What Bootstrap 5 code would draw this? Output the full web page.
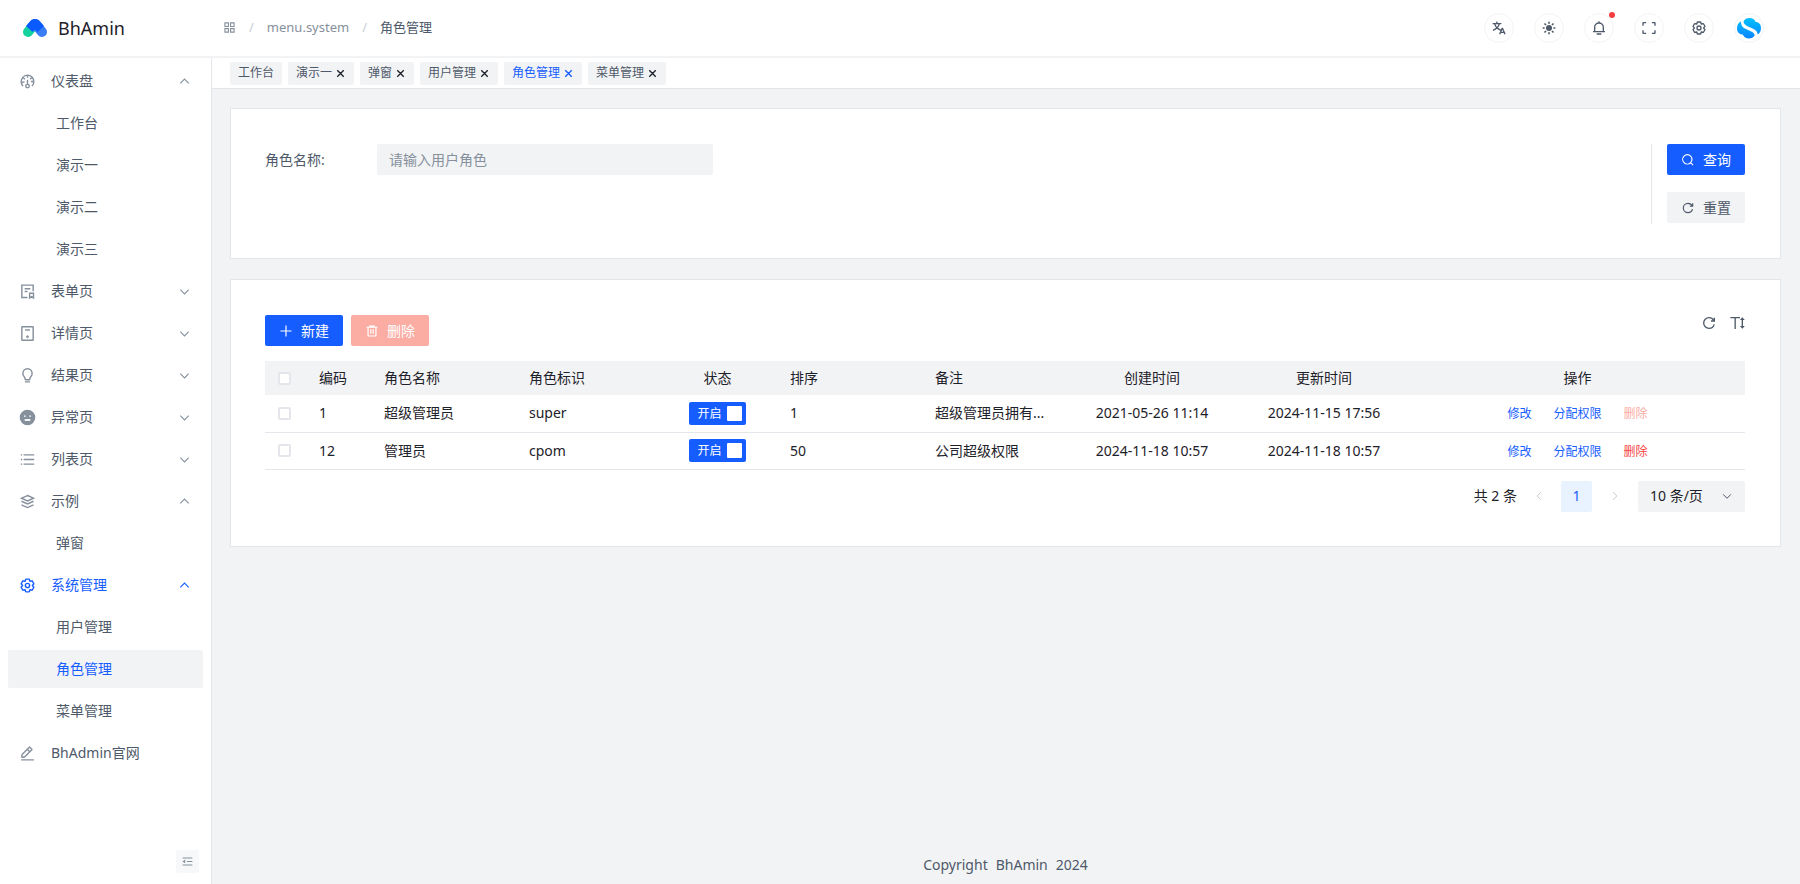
<!DOCTYPE html>
<html lang="zh-CN">
<head>
<meta charset="utf-8">
<meta name="viewport" content="width=device-width, initial-scale=1">
<title>BhAmin - 角色管理</title>
<link href="https://cdn.jsdelivr.net/npm/bootstrap@5.3.0/dist/css/bootstrap.min.css" rel="stylesheet">
<style>
:root{--brand:#165dff;--line:#e5e6eb;--fill:#f2f3f5;--t1:#1d2129;--t2:#4e5969;--t3:#86909c}
body{font-family:"Noto Sans","Noto Sans CJK SC",sans-serif;font-size:14px;line-height:22px;color:var(--t2);background:var(--fill)}
a{text-decoration:none;color:inherit}
.ico{width:1em;height:1em;fill:none;stroke:currentColor;stroke-width:4;flex:none}
.topbar{height:58px;background:#fff;border-bottom:2px solid var(--fill);padding:0 36px 0 22px}
.brand-box{width:201px;gap:10px;font-size:18px;color:var(--t1)}
.crumbs{gap:13px;color:var(--t3);font-size:13px;padding-bottom:2px}
.crumbs .sep{color:#c9cdd4}
.crumbs .here{color:var(--t2)}
.tools{gap:20px}
.round-btn{width:30px;height:30px;padding:0;border:1px solid var(--fill);border-radius:50%;background:#fff;color:var(--t2);font-size:16px}
.dot{position:absolute;width:6px;height:6px;border-radius:50%;background:#f53f3f;top:-2px;right:-2px}
.side{width:212px;background:#fff;padding:4px 8px 11px 8px;border-right:1px solid var(--line)}
.side-menu{gap:4px}
.side-link{height:38px;padding:0 12px 0 11px;border-radius:2px;color:var(--t2)}
.side-link .ico{font-size:17px;color:var(--t3);margin-right:15px}
.side-link .ico.arrow{font-size:13px;margin:0 0 0 auto}
.side-link.sub{padding-left:48px}
.side-link.on,.side-link.on .ico{color:var(--brand)}
.side-link.picked{background:var(--fill);color:var(--brand)}
.fold{width:23px;height:23px;padding:0;border:0;border-radius:2px;background:#f7f8fa;color:var(--t3);font-size:13px;margin-right:4px}
.tabbar{height:31px;background:#fff;border-bottom:1px solid var(--line);padding:0 18px;gap:6px}
.page-tab{height:23px;padding:0 8px;gap:3px;background:var(--fill);border-radius:2px;font-size:12px;color:var(--t2)}
.page-tab button{border:0;background:none;padding:0;font-size:11px;color:var(--t1)}
.page-tab .ico{stroke-width:6}
.page-tab.on,.page-tab.on button{color:var(--brand)}
.body-area{padding:19px 19px 0 18px;gap:20px}
.panel{background:#fff;border:1px solid var(--line);padding:35px 35px 34px 34px}
.field{height:31px;width:336px;border:0;border-radius:2px;background:var(--fill);padding:0 12px;color:var(--t1);font-size:14px}
.field::placeholder{color:var(--t3)}
.field-label{width:112px}
.btn-a{--bs-btn-font-size:14px;--bs-btn-line-height:22px;--bs-btn-padding-x:14px;--bs-btn-padding-y:0;--bs-btn-border-radius:2px;--bs-btn-border-width:0;height:31px;gap:8px}
.btn-main,.btn-main:hover{background:var(--brand);color:#fff}
.btn-plain,.btn-plain:hover{background:var(--fill);color:var(--t2)}
.btn-warn:disabled{background:#fbaca3;color:#fff;opacity:1}
.search-actions{gap:17px;padding:0 0 1px 15px;border-left:1px solid var(--line)}
.icon-btns{gap:12px}
.icon-btn{border:0;background:none;padding:0;color:var(--t2);font-size:16px}
.grid{table-layout:fixed;width:100%;margin-top:15px;color:var(--t1)}
.grid th{height:34px;background:var(--fill);font-weight:400;padding:0 15px}
.grid td{height:37px;border-bottom:1px solid var(--line);padding:0 15px}
.grid .pick{padding:0}
.grid .mid{text-align:center;padding:0}
.box{display:block;margin:auto;appearance:none;width:13px;height:13px;border:2px solid var(--line);border-radius:2px;background:#fff}
.box:checked{background:var(--brand);border-color:var(--brand)}
.status{height:23px;padding:0 4px 0 8px;gap:5px;border-radius:2px;background:var(--brand);color:#fff;font-size:12px;vertical-align:middle}
.status input{appearance:none;width:15px;height:15px;margin:0;border-radius:1px;background:#fff}
.ops{gap:22px;font-size:12px;color:var(--brand);padding-top:2px}
.ops button{border:0;background:none;padding:0;color:#f53f3f}
.ops button:disabled{color:#fbaca3}
.pager{margin-top:11px;color:var(--t1)}
.pager .total{margin-right:6px}
.pager button{border:0;background:none;width:31px;height:31px;padding:0;border-radius:2px;font-size:12px;color:#c9cdd4}
.pager .cur{background:#e8f3ff;color:var(--brand);font-size:14px;margin:0 7px}
.size-pick{width:107px;height:31px;border:0;border-radius:2px;padding:0 12px;appearance:none;margin-left:8px;color:var(--t1);
background:var(--fill) url("data:image/svg+xml,%3Csvg xmlns='http://www.w3.org/2000/svg' viewBox='0 0 48 48' fill='none' stroke='%234e5969' stroke-width='4'%3E%3Cpath d='M39.6 17.443 24.043 33 8.487 17.443'/%3E%3C/svg%3E") no-repeat right 12px center/12px}
.foot{padding-bottom:8px}
</style>
</head>
<body class="d-flex flex-column min-vh-100">
<svg class="d-none">
<symbol id="up" viewBox="0 0 48 48"><path d="M39.6 30.557 24.043 15 8.487 30.557"/></symbol>
<symbol id="down" viewBox="0 0 48 48"><path d="M39.6 17.443 24.043 33 8.487 17.443"/></symbol>
<symbol id="x" viewBox="0 0 48 48"><path d="M9.857 9.858 24 24m0 0 14.142 14.142M24 24 38.142 9.858M24 24 9.857 38.142"/></symbol>
<symbol id="gear" viewBox="0 0 48 48"><path d="M18.797 6.732A1 1 0 0 1 19.76 6h8.48a1 1 0 0 1 .964.732l1.285 4.628a1 1 0 0 0 1.213.7l4.651-1.2a1 1 0 0 1 1.116.468l4.24 7.344a1 1 0 0 1-.153 1.2L38.193 23.3a1 1 0 0 0 0 1.402l3.364 3.427a1 1 0 0 1 .153 1.2l-4.24 7.344a1 1 0 0 1-1.116.468l-4.65-1.2a1 1 0 0 0-1.214.7l-1.285 4.628a1 1 0 0 1-.964.732h-8.48a1 1 0 0 1-.963-.732L17.51 36.64a1 1 0 0 0-1.213-.7l-4.65 1.2a1 1 0 0 1-1.116-.468l-4.24-7.344a1 1 0 0 1 .153-1.2L9.809 24.7a1 1 0 0 0 0-1.402l-3.364-3.427a1 1 0 0 1-.153-1.2l4.24-7.344a1 1 0 0 1 1.116-.468l4.65 1.2a1 1 0 0 0 1.213-.7l1.286-4.628Z"/><path d="M30 24a6 6 0 1 1-12 0 6 6 0 0 1 12 0Z"/></symbol>
<symbol id="reload" viewBox="0 0 48 48"><path d="M38.837 18C36.463 12.136 30.715 8 24 8 15.163 8 8 15.163 8 24s7.163 16 16 16c7.455 0 13.72-5.1 15.496-12M40 8v10H30"/></symbol>
</svg>

<header class="topbar d-flex align-items-center">
  <a href="#" class="brand-box d-flex align-items-center">
    <svg width="26" height="20" viewBox="0 0 26 20" fill="none" stroke-linecap="round"><path d="M6 14 11 8" stroke="#14d1a0" stroke-width="10"/><path d="M20 14 15 8" stroke="#3a7bf6" stroke-width="10"/><path d="M13 1c2 0 3.500.6 4.700 1.900L22 8l-6.500 6L13 11.500 10.500 14 4 8l4.300-5.100C9.500 1.600 11 1 13 1z" fill="#0a5bff"/></svg>
    <span>BhAmin</span>
  </a>
  <nav class="crumbs d-flex align-items-center" aria-label="breadcrumb">
    <svg class="ico" viewBox="0 0 48 48"><path d="M7 7h13v13H7V7ZM28 7h13v13H28V7ZM7 28h13v13H7V28ZM28 28h13v13H28V28Z"/></svg>
    <span class="sep">/</span><a href="#">menu.system</a><span class="sep">/</span><span class="here">角色管理</span>
  </nav>
  <div class="tools d-flex align-items-center ms-auto">
    <button class="round-btn d-flex align-items-center justify-content-center" aria-label="语言"><svg class="ico" viewBox="0 0 48 48" stroke-width="5"><path d="m42 43-2.385-6M26 43l2.384-6m11.231 0-.795-2-4.18-10h-1.280l-4.181 10-.795 2m11.231 0h-11.230M17 5l1 5M5 11h26M11 11s1.889 7.826 6.611 12.174C22.333 27.522 30 31 30 31"/><path d="M25 11s-1.889 7.826-6.611 12.174C13.667 27.522 6 31 6 31"/></svg></button>
    <button class="round-btn d-flex align-items-center justify-content-center" aria-label="主题"><svg class="ico" viewBox="0 0 48 48"><circle cx="24" cy="24" r="9" fill="currentColor" stroke="none"/><path stroke-width="5" d="M24 5v6M24 37v6M5 24h6M37 24h6M10.500 10.500l4.500 4.500M33 33l4.500 4.500M37.500 10.500 33 15M15 33l-4.500 4.500"/></svg></button>
    <button class="round-btn d-flex align-items-center justify-content-center position-relative" aria-label="通知"><svg class="ico" viewBox="0 0 48 48"><path d="M24 9c7.180 0 13 5.820 13 13v13H11V22c0-7.180 5.820-13 13-13Zm0 0V4M6 35h36m-25 7h14"/></svg><span class="dot"></span></button>
    <button class="round-btn d-flex align-items-center justify-content-center" aria-label="全屏"><svg class="ico" viewBox="0 0 48 48"><path d="M42 17V9a1 1 0 0 0-1-1h-8M6 17V9a1 1 0 0 1 1-1h8m27 23v8a1 1 0 0 1-1 1h-8M6 31v8a1 1 0 0 0 1 1h8"/></svg></button>
    <button class="round-btn d-flex align-items-center justify-content-center" aria-label="设置"><svg class="ico"><use href="#gear"/></svg></button>
    <button class="round-btn d-flex align-items-center justify-content-center" aria-label="用户">
      <svg width="24" height="22" viewBox="0 0 24 22" class="flex-shrink-0"><defs><linearGradient id="sky" x1="0" y1="0" x2="0" y2="22" gradientUnits="userSpaceOnUse"><stop offset="0" stop-color="#00c3ff"/><stop offset="1" stop-color="#0a84ff"/></linearGradient></defs><path fill="url(#sky)" d="M6.500 4.500C7.500 2 10 1 12.500 1c3 0 5.300 1.600 6.100 4C22 5 24 7.500 24 11c0 3-1.200 5.500-3.300 6.600C20.500 14 18 12.600 14 10.800 10 9 7 8 6.500 4.500z"/><path fill="url(#sky)" d="M4 4.400C3.800 9 6 10.600 10 12.400c4 1.800 7.600 3 7.700 6.200C16.500 20.600 14.500 21.500 12 21.500c-3 0-5.200-1.500-6.200-4C2.300 17.500 0 15 0 11.500 0 8 1.500 5.400 4 4.400z"/></svg>
    </button>
  </div>
</header>

<div class="d-flex flex-grow-1">
  <aside class="side d-flex flex-column flex-shrink-0">
    <nav class="side-menu d-flex flex-column">
      <a href="#" class="side-link d-flex align-items-center"><svg class="ico" viewBox="0 0 48 48"><path d="M41.808 24c.118 4.630-1.486 9.333-5.210 13m5.210-13h-8.309m8.309 0c-.112-4.380-1.767-8.694-4.627-12M24 6c5.531 0 10.070 2.404 13.180 6M24 6c-5.724 0-10.384 2.574-13.500 6.380M24 6v7.500M37.180 12 31 17.500m-20.500-5.120L17 17.500m-6.500-5.120C6.990 16.662 5.440 22.508 6.530 28m4.872 9c-2.650-2.609-4.226-5.742-4.873-9m0 0 8.970-3.500"/><path d="M24 32a5 5 0 1 0 0 10 5 5 0 0 0 0-10Zm0 0V19"/></svg>仪表盘<svg class="ico arrow"><use href="#up"/></svg></a>
      <a href="#" class="side-link sub d-flex align-items-center">工作台</a>
      <a href="#" class="side-link sub d-flex align-items-center">演示一</a>
      <a href="#" class="side-link sub d-flex align-items-center">演示二</a>
      <a href="#" class="side-link sub d-flex align-items-center">演示三</a>
      <a href="#" class="side-link d-flex align-items-center"><svg class="ico" viewBox="0 0 48 48"><path d="M16 16h16M16 24h8"/><path d="M24 41H8V6h32v17"/><path d="M30 29h11v13l-5.500-3.500L30 42V29Z"/></svg>表单页<svg class="ico arrow"><use href="#down"/></svg></a>
      <a href="#" class="side-link d-flex align-items-center"><svg class="ico" viewBox="0 0 48 48"><rect x="8" y="5" width="32" height="38" rx="1"/><path d="M17 14h14"/><circle cx="24" cy="33" r="3" fill="currentColor" stroke-width="2"/></svg>详情页<svg class="ico arrow"><use href="#down"/></svg></a>
      <a href="#" class="side-link d-flex align-items-center"><svg class="ico" viewBox="0 0 48 48"><path d="M17 42h14m6-24c0 2.823-.9 5.437-2.430 7.568-1.539 2.147-3.185 4.320-3.770 6.897l-.623 2.756A1 1 0 0 1 29.200 36H18.800a1 1 0 0 1-.976-.779l-.624-2.756c-.584-2.576-2.230-4.750-3.770-6.897A12.940 12.940 0 0 1 11 18c0-7.180 5.820-13 13-13s13 5.820 13 13Z"/></svg>结果页<svg class="ico arrow"><use href="#down"/></svg></a>
      <a href="#" class="side-link d-flex align-items-center"><svg class="ico" viewBox="0 0 48 48"><circle cx="24" cy="24" r="20" fill="currentColor"/><path stroke="#fff" d="M14 20h5M29 20h5"/><path stroke="#fff" stroke-width="5" d="M16 31h16"/></svg>异常页<svg class="ico arrow"><use href="#down"/></svg></a>
      <a href="#" class="side-link d-flex align-items-center"><svg class="ico" viewBox="0 0 48 48"><path d="M13 24h30M5 11h4m4 26h30M13 11h30M5 24h4M5 37h4"/></svg>列表页<svg class="ico arrow"><use href="#down"/></svg></a>
      <a href="#" class="side-link d-flex align-items-center"><svg class="ico" viewBox="0 0 48 48"><path d="M24.015 7.017 41 14.620l-16.985 7.605L7.030 14.620l16.985-7.604Z"/><path d="m41 23.255-16.985 7.604L7.030 23.255M40.970 33.412l-16.985 7.605L7 33.412"/></svg>示例<svg class="ico arrow"><use href="#up"/></svg></a>
      <a href="#" class="side-link sub d-flex align-items-center">弹窗</a>
      <a href="#" class="side-link on d-flex align-items-center"><svg class="ico"><use href="#gear"/></svg>系统管理<svg class="ico arrow"><use href="#up"/></svg></a>
      <a href="#" class="side-link sub d-flex align-items-center">用户管理</a>
      <a href="#" class="side-link sub picked d-flex align-items-center" aria-current="page">角色管理</a>
      <a href="#" class="side-link sub d-flex align-items-center">菜单管理</a>
      <a href="#" class="side-link d-flex align-items-center"><svg class="ico" viewBox="0 0 48 48"><path d="m30.480 19.038 5.733-5.734a1 1 0 0 0 0-1.414l-5.586-5.586a1 1 0 0 0-1.414 0l-5.734 5.734m7 7L15.763 33.754a1 1 0 0 1-.590.286l-6.048.708a1 1 0 0 1-1.113-1.069l.477-6.310a1 1 0 0 1 .290-.631l14.700-14.700m7 7-7-7M6 42h36"/></svg>BhAdmin官网</a>
    </nav>
    <button class="fold d-flex align-items-center justify-content-center mt-auto ms-auto" aria-label="收起菜单"><svg class="ico" viewBox="0 0 48 48"><path d="M42 11H6M42 24H22M42 37H6M13.660 26.912l-4.820-3.118 4.820-3.118v6.236Z"/></svg></button>
  </aside>

  <main class="d-flex flex-column flex-grow-1">
    <div class="tabbar d-flex align-items-center">
      <div class="page-tab d-flex align-items-center"><a href="#">工作台</a></div>
      <div class="page-tab d-flex align-items-center"><a href="#">演示一</a><button class="d-flex" aria-label="关闭"><svg class="ico"><use href="#x"/></svg></button></div>
      <div class="page-tab d-flex align-items-center"><a href="#">弹窗</a><button class="d-flex" aria-label="关闭"><svg class="ico"><use href="#x"/></svg></button></div>
      <div class="page-tab d-flex align-items-center"><a href="#">用户管理</a><button class="d-flex" aria-label="关闭"><svg class="ico"><use href="#x"/></svg></button></div>
      <div class="page-tab on d-flex align-items-center"><a href="#">角色管理</a><button class="d-flex" aria-label="关闭"><svg class="ico"><use href="#x"/></svg></button></div>
      <div class="page-tab d-flex align-items-center"><a href="#">菜单管理</a><button class="d-flex" aria-label="关闭"><svg class="ico"><use href="#x"/></svg></button></div>
    </div>

    <div class="body-area d-flex flex-column flex-grow-1">
      <form class="panel d-flex align-items-start">
        <div class="d-flex align-items-center">
          <label class="field-label" for="roleName">角色名称:</label>
          <input class="field" id="roleName" type="text" placeholder="请输入用户角色">
        </div>
        <div class="search-actions d-flex flex-column ms-auto">
          <button type="button" class="btn btn-a btn-main d-flex align-items-center"><svg class="ico" viewBox="0 0 48 48"><path d="M33.072 33.071c6.248-6.248 6.248-16.379 0-22.627-6.249-6.249-16.380-6.249-22.628 0-6.248 6.248-6.248 16.379 0 22.627 6.248 6.248 16.380 6.248 22.628 0Zm0 0 8.485 8.485"/></svg>查询</button>
          <button type="reset" class="btn btn-a btn-plain d-flex align-items-center"><svg class="ico"><use href="#reload"/></svg>重置</button>
        </div>
      </form>

      <section class="panel">
        <div class="d-flex align-items-start">
          <div class="d-flex gap-2">
            <button class="btn btn-a btn-main d-flex align-items-center"><svg class="ico" viewBox="0 0 48 48"><path d="M5 24h38M24 5v38"/></svg>新建</button>
            <button class="btn btn-a btn-warn d-flex align-items-center" disabled><svg class="ico" viewBox="0 0 48 48"><path d="M5 11h5.500m0 0v29a1 1 0 0 0 1 1h25a1 1 0 0 0 1-1V11m-27 0H16m21.500 0H43m-5.500 0H32m-16 0V7h16v4m-16 0h16M20 18v15m8-15v15"/></svg>删除</button>
          </div>
          <div class="icon-btns d-flex ms-auto">
            <button class="icon-btn d-flex" aria-label="刷新"><svg class="ico"><use href="#reload"/></svg></button>
            <button class="icon-btn d-flex" aria-label="密度"><svg class="ico" viewBox="0 0 48 48"><path d="M4 8h14.500M33 8H18.500m0 0v34"/><path d="M40 9.500 37 13h6l-3-3.500Zm0 29 3-3.500h-6l3 3.500ZM40 11v26"/></svg></button>
          </div>
        </div>

        <table class="grid">
          <colgroup><col width="39"><col width="65"><col width="145"><col width="146"><col width="115"><col width="145"><col width="146"><col width="172"><col width="172"><col></colgroup>
          <thead><tr>
            <th class="pick"><input class="box" type="checkbox" aria-label="全选"></th><th>编码</th><th>角色名称</th><th>角色标识</th><th class="mid">状态</th><th>排序</th><th>备注</th><th class="mid">创建时间</th><th class="mid">更新时间</th><th class="mid">操作</th>
          </tr></thead>
          <tbody>
            <tr>
              <td class="pick"><input class="box" type="checkbox" aria-label="选择 1"></td><td>1</td><td>超级管理员</td><td>super</td>
              <td class="mid"><label class="status d-inline-flex align-items-center"><span>开启</span><input type="checkbox" role="switch" checked></label></td>
              <td>1</td><td class="text-nowrap">超级管理员拥有...</td><td class="mid">2021-05-26 11:14</td><td class="mid">2024-11-15 17:56</td>
              <td class="mid"><div class="ops d-flex justify-content-center"><a href="#">修改</a><a href="#">分配权限</a><button disabled>删除</button></div></td>
            </tr>
            <tr>
              <td class="pick"><input class="box" type="checkbox" aria-label="选择 12"></td><td>12</td><td>管理员</td><td>cpom</td>
              <td class="mid"><label class="status d-inline-flex align-items-center"><span>开启</span><input type="checkbox" role="switch" checked></label></td>
              <td>50</td><td>公司超级权限</td><td class="mid">2024-11-18 10:57</td><td class="mid">2024-11-18 10:57</td>
              <td class="mid"><div class="ops d-flex justify-content-center"><a href="#">修改</a><a href="#">分配权限</a><button>删除</button></div></td>
            </tr>
          </tbody>
        </table>

        <div class="pager d-flex align-items-center justify-content-end">
          <span class="total">共 2 条</span>
          <button class="d-flex align-items-center justify-content-center" aria-label="上一页"><svg class="ico" viewBox="0 0 48 48"><path d="M32 8.400 16.444 23.956 32 39.513"/></svg></button>
          <button class="cur">1</button>
          <button class="d-flex align-items-center justify-content-center" aria-label="下一页"><svg class="ico" viewBox="0 0 48 48"><path d="m16 39.513 15.556-15.557L16 8.400"/></svg></button>
          <select class="size-pick" aria-label="每页条数"><option>10 条/页</option><option>20 条/页</option></select>
        </div>
      </section>

      <footer class="foot mt-auto d-flex justify-content-center gap-2"><span>Copyright</span><span>BhAmin</span><span>2024</span></footer>
    </div>
  </main>
</div>
<script src="https://cdn.jsdelivr.net/npm/bootstrap@5.3.0/dist/js/bootstrap.bundle.min.js"></script>
</body>
</html>
